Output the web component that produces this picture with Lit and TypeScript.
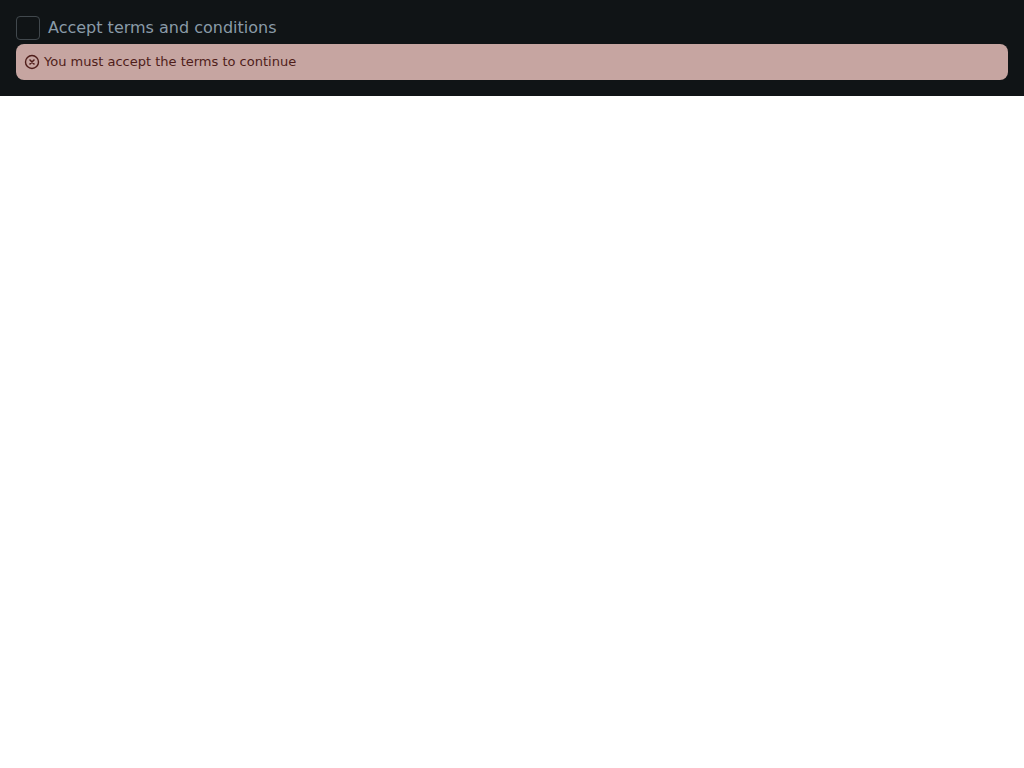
import { LitElement, html, css } from "lit";
import { customElement } from "lit/decorators.js";

@customElement("app-root")
export class AppRoot extends LitElement {
  static styles = css`
    :host { display: block; font-family: "DejaVu Sans", sans-serif; }
    .panel { background: #101416; padding: 16px; display: flex; flex-direction: column; gap: 4px; height: 96px; box-sizing: border-box; }
    .row { display: flex; align-items: center; gap: 8px; height: 24px; }
    .box { width: 24px; height: 24px; box-sizing: border-box; border: 1px solid #41484d; border-radius: 4px; flex: none; }
    .label { font-size: 16px; line-height: 24px; color: #8a9ba8; }
    .alert { display: flex; align-items: center; gap: 4px; height: 36px; box-sizing: border-box; padding: 0 8px; background: #c6a5a1; border-radius: 8px; color: #4f1d1a; font-size: 13px; line-height: 20px; }
    svg { display: block; flex: none; }
  `;
  render() {
    return html`<div class="panel">
      <div class="row"><span class="box"></span><span class="label">Accept terms and conditions</span></div>
      <div class="alert">
        <svg width="16" height="16" viewBox="0 0 16 16" fill="none" stroke="#4f1d1a" stroke-width="1.4">
          <circle cx="8" cy="8" r="6.5"></circle>
          <path d="M6 6l4 4M10 6l-4 4" stroke-width="1.6" stroke-linecap="round"></path>
        </svg>
        <span>You must accept the terms to continue</span>
      </div>
    </div>`;
  }
}
